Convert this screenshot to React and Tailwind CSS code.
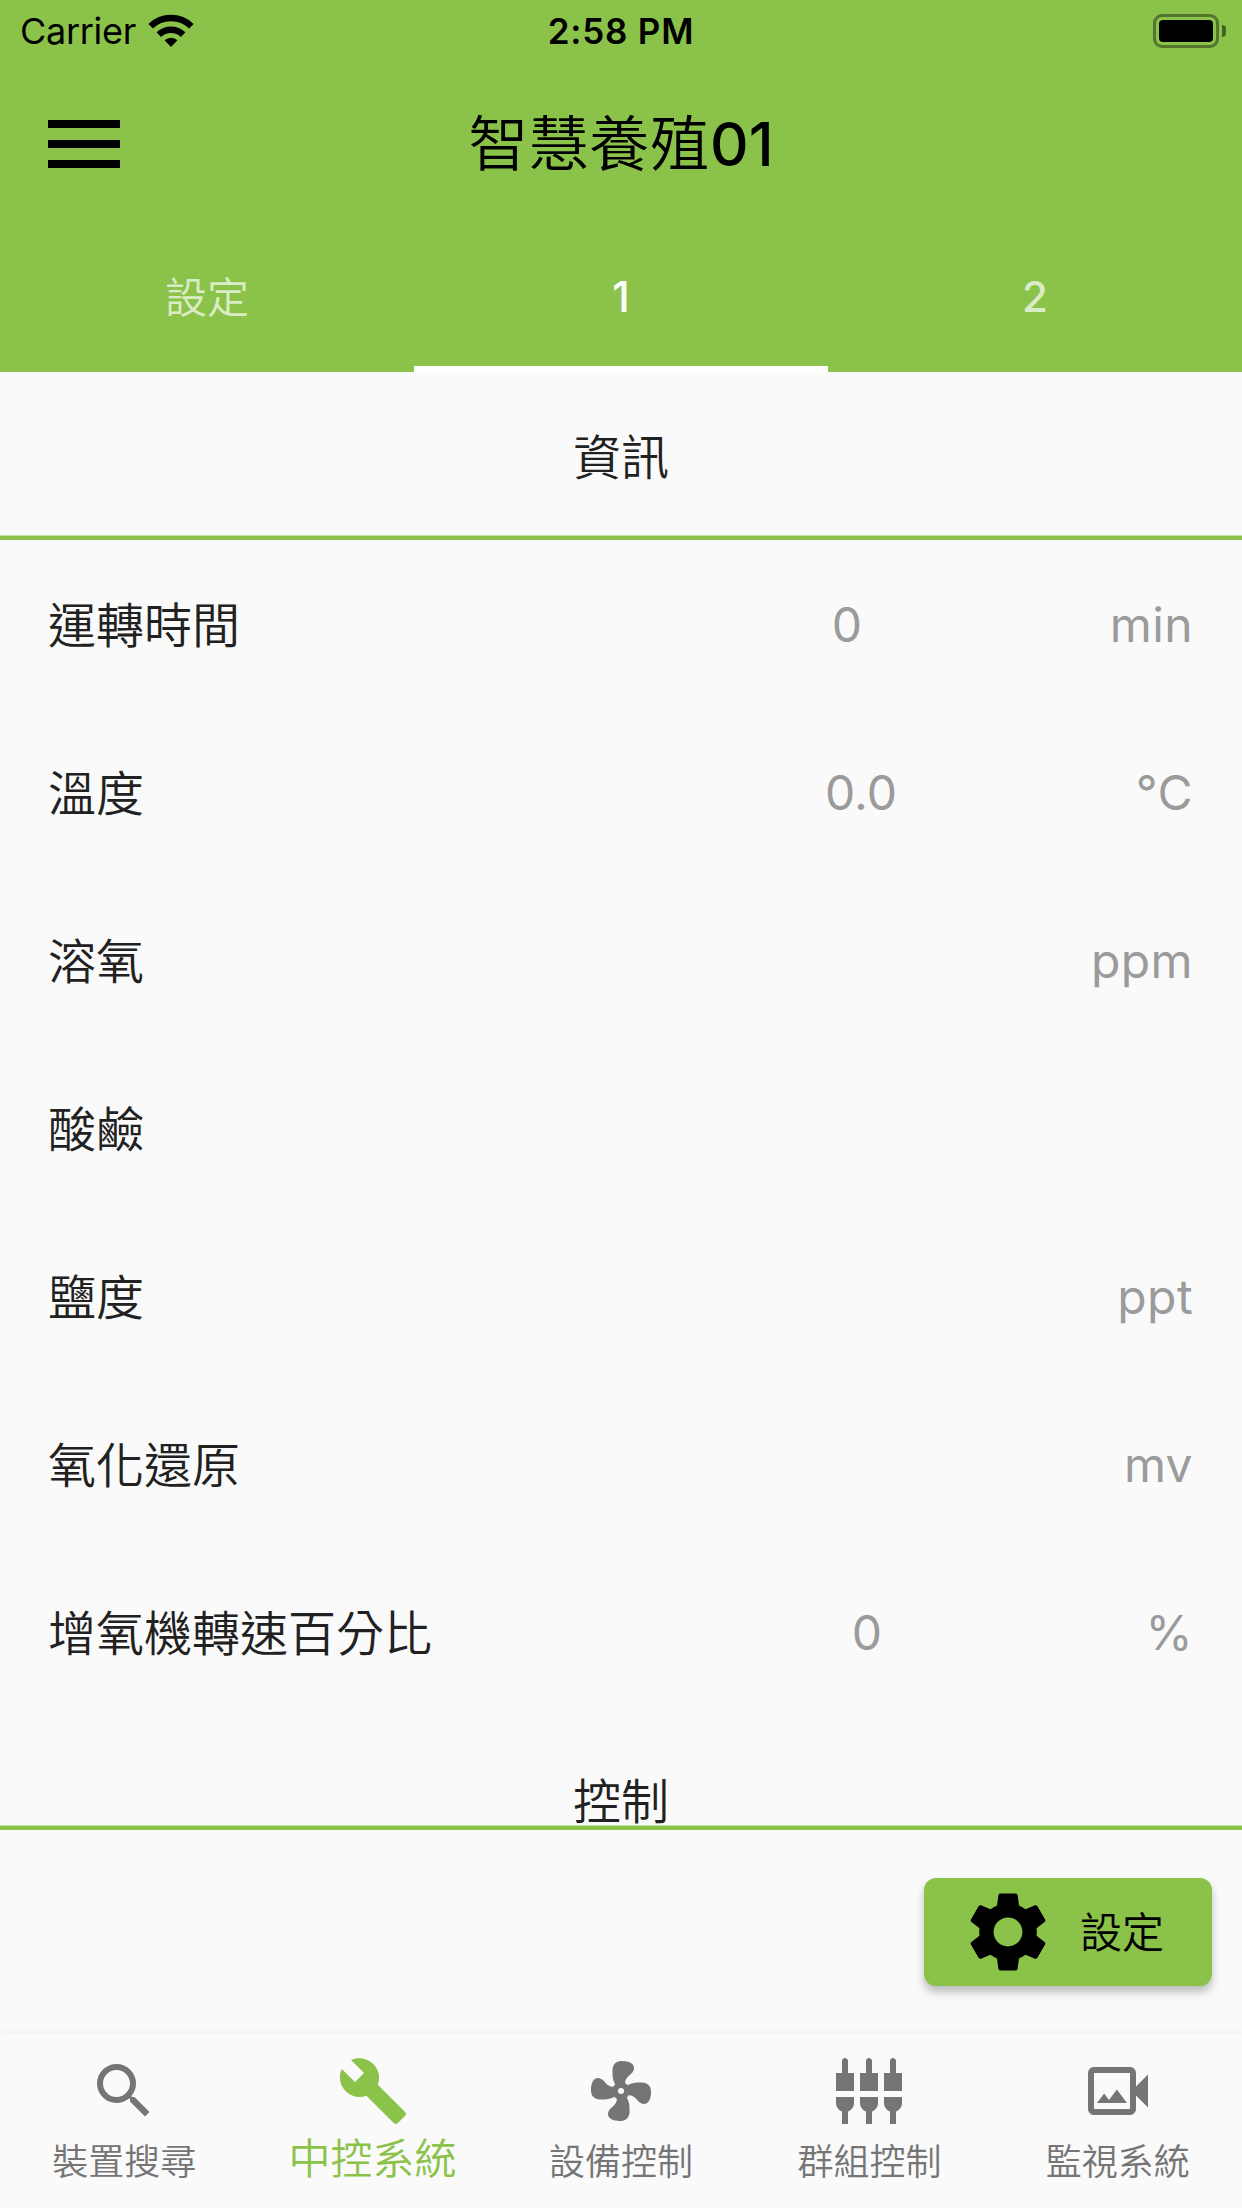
import React from 'react';
import {
  MdSearch,
  MdBuild,
  MdSettingsInputComponent,
  MdOutlineVideoCameraBack,
  MdMenu,
  MdSettings,
} from 'react-icons/md';

const rows = [
  { label: '運轉時間', value: '0', unit: 'min', pad: 'pr-[380px]' },
  { label: '溫度', value: '0.0', unit: '°C', pad: 'pr-[345px]' },
  { label: '溶氧', unit: 'ppm' },
  { label: '酸鹼' },
  { label: '鹽度', unit: 'ppt' },
  { label: '氧化還原', unit: 'mv' },
  { label: '增氧機轉速百分比', value: '0', unit: '%', pad: 'pr-[360px]' },
];

const FanIcon = ({ className }) => (
  <svg viewBox="0 0 72 72" fill="currentColor" className={className}>
    <path d="M30 29C27 24 27.5 18 27.5 14C28.500 8 32 6 37 6C45 6 49 9 49 13C49 20 40 20 40 29Z" />
    <path d="M43 30C48 27 54 27.500 58 27.500C64 28.500 66 32 66 37C66 45 63 49 59 49C52 49 52 40 43 40Z" />
    <path d="M42 43C45 48 44.500 54 44.500 58C43.500 64 40 66 35 66C27 66 23 63 23 59C23 52 32 52 32 43Z" />
    <path d="M29 42C24 45 18 44.500 14 44.500C8 43.500 6 40 6 35C6 27 9 23 13 23C20 23 20 32 29 32Z" />
    <path fillRule="evenodd" d="M36 27a9 9 0 1 0 0 18a9 9 0 0 0 0-18ZM36 33a3 3 0 1 1 0 6a3 3 0 0 1 0-6Z" />
  </svg>
);

const WifiIcon = () => (
  <svg viewBox="0 0 46 34" className="w-[46px] h-[34px]" fill="none" stroke="#000">
    <path d="M2.6 12.2A29.5 29.5 0 0 1 43.4 12.2" strokeWidth="6.4" />
    <path d="M10.8 20.6A17.8 17.8 0 0 1 35.2 20.6" strokeWidth="6.4" />
    <path d="M16.5 26.3A9.5 9.5 0 0 1 29.5 26.3L23 33Z" fill="#000" stroke="none" />
  </svg>
);

const tabs = [
  { label: '裝置搜尋', Icon: MdSearch },
  { label: '中控系統', Icon: MdBuild, active: true },
  { label: '設備控制', Icon: FanIcon },
  { label: '群組控制', Icon: MdSettingsInputComponent },
  { label: '監視系統', Icon: MdOutlineVideoCameraBack },
];

const StatusBar = () => (
  <div className="h-[60px] grid grid-cols-3 items-center text-black">
    <div className="flex items-center gap-[12px] pl-[20px]">
      <span className="text-[36px] leading-[60px] tracking-[-0.3px] pt-[1px]">Carrier</span>
      <WifiIcon />
    </div>
    <div className="text-center text-[35px] font-semibold leading-[60px] pt-[1px] tracking-[0.8px]">2:58 PM</div>
    <div className="flex items-center justify-end gap-[3px] pr-[16px]">
      <div className="w-[66px] h-[34px] rounded-[9px] border-[3px] border-black/40 p-[3px]">
        <div className="w-full h-full rounded-[4px] bg-black"></div>
      </div>
      <div className="w-[4px] h-[12px] rounded-r-full bg-black/50"></div>
    </div>
  </div>
);

const InfoRow = ({ row }) => (
  <div className="relative h-[168px] flex items-center justify-between pl-[48px] pr-[49px] text-[48px]">
    <span className="text-[#212121] font-[350] pt-[4px]">{row.label}</span>
    <span className="text-[#9b9b9b] font-[370] tracking-[0.4px] pt-[1px]">{row.unit}</span>
    {row.value && (
      <div className={`absolute inset-0 flex items-center justify-end pt-[1px] font-[370] text-[#9b9b9b] ${row.pad}`}>
        {row.value}
      </div>
    )}
  </div>
);

export default function App() {
  return (
    <div className="w-[1242px] h-[2208px] flex flex-col overflow-hidden bg-[#fafafa] font-['Inter','Noto_Sans_CJK_TC',sans-serif]">
      <header className="bg-[#8bc34a] h-[372px] shrink-0 flex flex-col">
        <StatusBar />
        <div className="h-[168px] grid grid-cols-3 items-center text-black">
          <MdMenu className="w-[96px] h-[96px] ml-[36px]" />
          <h1 className="text-center text-[60px] font-medium whitespace-nowrap">
            <span className="font-[350] tracking-[0.4px]">智慧養殖</span>01
          </h1>
        </div>
        <div className="h-[144px] grid grid-cols-3 text-[42px] text-white/70">
          <div className="flex items-center justify-center font-[350] pb-[6px]">設定</div>
          <div className="flex items-center justify-center font-medium text-white border-b-[6px] border-white pb-[2px]">1</div>
          <div className="flex items-center justify-center font-medium pb-[8px]">2</div>
        </div>
      </header>

      <main className="h-[1458px] shrink-0 overflow-hidden border-b-[4px] border-[#8bc34a] shadow-[inset_0_-1px_0_rgba(139,195,74,0.5)]">
        <div className="h-[168px] flex items-center justify-center border-b-[4px] border-[#8bc34a] shadow-[inset_0_-1px_0_rgba(139,195,74,0.5)] pt-[8px] text-[48px] font-[350] text-[#212121]">
          資訊
        </div>
        {rows.map((row) => (
          <InfoRow key={row.label} row={row} />
        ))}
        <div className="h-[168px] flex items-center justify-center pt-[4px] text-[48px] font-[350] text-[#212121]">控制</div>
      </main>

      <div className="h-[204px] shrink-0 flex justify-end pt-[48px] pr-[30px]">
        <button className="w-[288px] h-[108px] rounded-[12px] bg-[#8bc34a] text-black flex items-center pl-[36px] gap-[24px] shadow-[0_6px_8px_rgba(0,0,0,0.25)]">
          <MdSettings className="w-[96px] h-[96px]" />
          <span className="text-[42px] font-[350]">設定</span>
        </button>
      </div>

      <nav className="flex-1 grid grid-cols-5 bg-[#fafafa] shadow-[0_-2px_6px_rgba(0,0,0,0.03)]">
        {tabs.map(({ label, Icon, active }) => (
          <div
            key={label}
            className={
              active
                ? 'flex flex-col items-center pt-[21px] text-[#8bc34a]'
                : 'flex flex-col items-center pt-[21px] text-[#757575]'
            }
          >
            <Icon className="w-[72px] h-[72px]" />
            <span className={active ? 'text-[42px] leading-[64px] font-[350]' : 'text-[36px] leading-[71px] font-[350]'}>{label}</span>
          </div>
        ))}
      </nav>
    </div>
  );
}
